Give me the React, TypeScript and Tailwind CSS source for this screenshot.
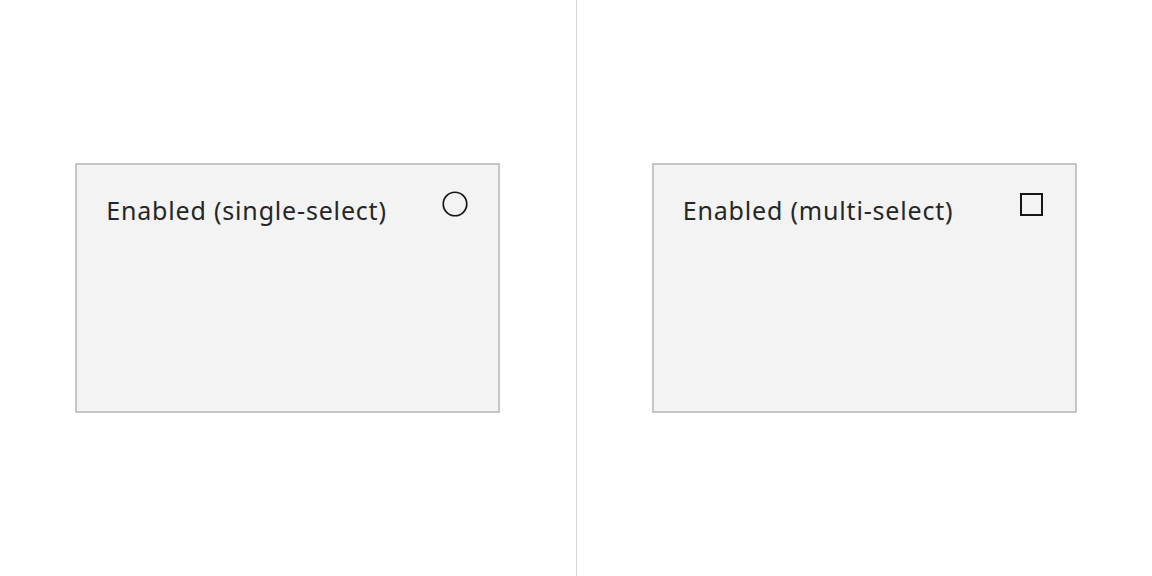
export default function App() {
  const tiles = [
    { label: 'Enabled (single-select)', kind: 'radio' },
    { label: 'Enabled (multi-select)', kind: 'check' },
  ]

  return (
    <div className="w-[1152px] h-[576px] bg-white flex" style={{ fontFamily: '"Noto Sans", "Open Sans", sans-serif' }}>
      {tiles.map((t, i) => (
        <div
          key={t.label}
          className={`flex-1 flex items-center justify-center ${i === 0 ? 'border-r-[1.5px] border-[#d6d6d6]' : ''}`}
        >
          <div className="w-[425px] h-[250px] bg-[#f3f3f3] border-2 border-[#c6c6c6] flex items-start justify-between pl-[29px] pr-[31px] pt-[27px]">
            <span className="text-[25px] leading-[36px] text-[#262626] tracking-[0.82px]">{t.label}</span>
            {t.kind === 'radio' ? (
              <svg width="26" height="26" viewBox="0 0 26 26" className="-mt-[1px] mr-[-1px]">
                <circle cx="13" cy="13" r="11.75" fill="none" stroke="#161616" strokeWidth="1.7" />
              </svg>
            ) : (
              <svg width="23" height="23" viewBox="0 0 23 23" className="mt-[1px] mr-[1px]">
                <rect x="1" y="1" width="21" height="21" fill="none" stroke="#161616" strokeWidth="2" />
              </svg>
            )}
          </div>
        </div>
      ))}
    </div>
  )
}
